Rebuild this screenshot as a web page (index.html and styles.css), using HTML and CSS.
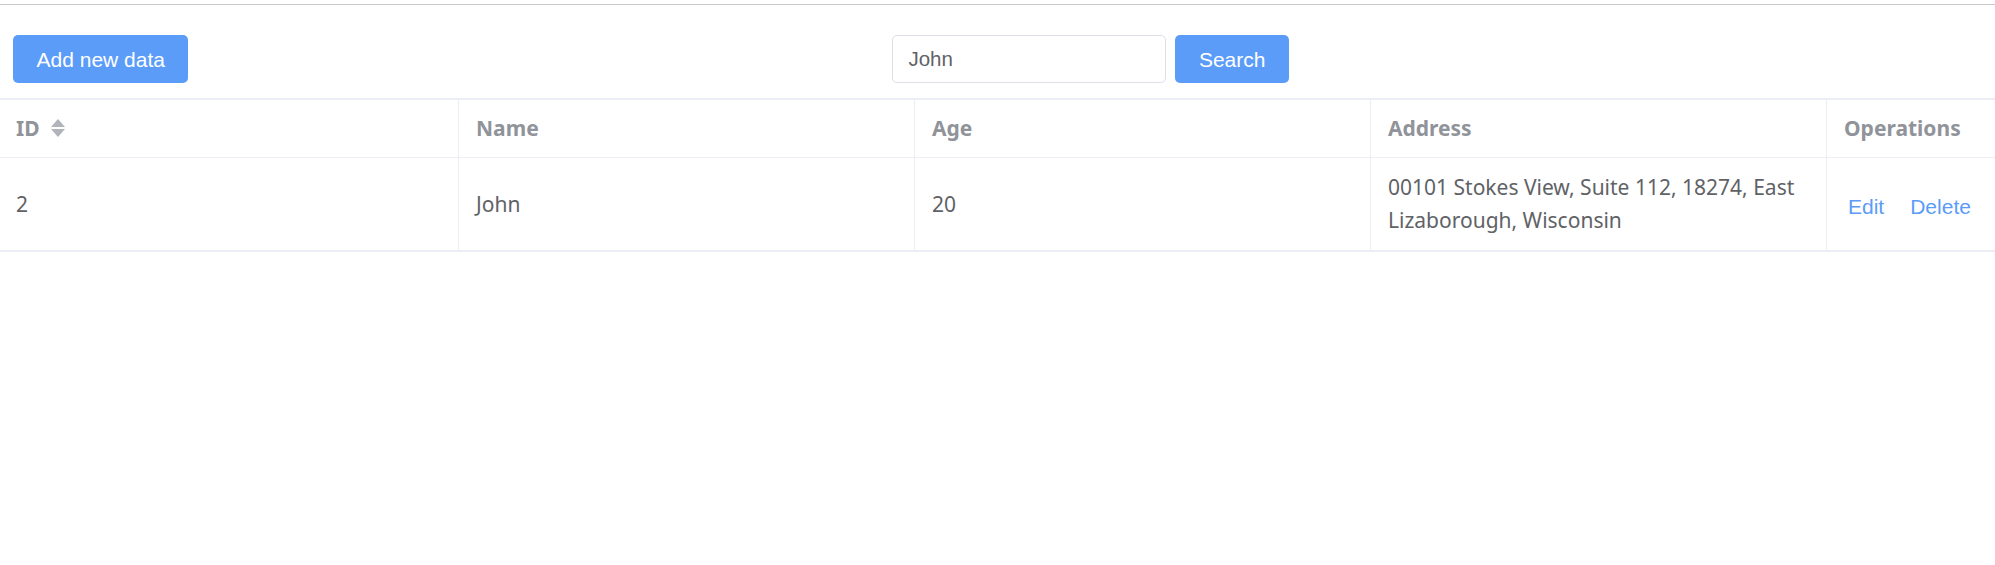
FILE: index.html
```html
<!DOCTYPE html>
<html lang="en">
<head>
<meta charset="utf-8">
<title>Data table</title>
<link rel="stylesheet" href="styles.css">
</head>
<body>
<div class="page">
  <div class="rule"></div>
  <div class="toolbar">
    <button class="btn" type="button">Add new data</button>
    <div class="search">
      <input class="search-input" type="text" value="John">
      <button class="btn" type="button">Search</button>
    </div>
  </div>
  <div class="table">
    <div class="row head">
      <div class="cell first">
        <span>ID</span>
        <svg class="sort" width="14" height="20" viewBox="0 0 14 20" aria-hidden="true">
          <polygon points="7,1 14,9 0,9" />
          <polygon points="0,11 14,11 7,19" />
        </svg>
      </div>
      <div class="cell">Name</div>
      <div class="cell">Age</div>
      <div class="cell">Address</div>
      <div class="cell">Operations</div>
    </div>
    <div class="row body">
      <div class="cell first">2</div>
      <div class="cell">John</div>
      <div class="cell">20</div>
      <div class="cell">00101 Stokes View, Suite 112, 18274, East Lizaborough, Wisconsin</div>
      <div class="cell ops">
        <a class="link" href="#">Edit</a>
        <a class="link" href="#">Delete</a>
      </div>
    </div>
  </div>
</div>
</body>
</html>
```

FILE: styles.css
```css
html, body {
  margin: 0;
  padding: 0;
  background: #ffffff;
}

.page {
  padding-top: 4px;
  font-family: "Noto Sans", "Open Sans", sans-serif;
}

.rule {
  height: 1px;
  background: #c9c9c9;
}

.toolbar {
  display: flex;
  align-items: center;
  padding: 30px 13px 15px;
}

.btn {
  box-sizing: border-box;
  height: 48px;
  padding: 0 23.5px;
  border: 0;
  border-radius: 5px;
  background: #5b9cf9;
  color: #ffffff;
  font-family: "Liberation Sans", Arial, sans-serif;
  font-size: 21px;
  line-height: 1;
}

.search {
  display: flex;
  align-items: center;
  gap: 9px;
  margin-left: 704px;
}

.search-input {
  box-sizing: border-box;
  width: 274px;
  height: 48px;
  padding: 0 15px;
  border: 1px solid #dcdfe6;
  border-radius: 5px;
  color: #606266;
  font-family: "Liberation Sans", Arial, sans-serif;
  font-size: 20.5px;
  outline: none;
}

.table {
  border-top: 2px solid #ebeef5;
}

.row {
  display: grid;
  grid-template-columns: 458px 456px 456px 456px 1fr;
}

.row.head {
  height: 58px;
  box-sizing: border-box;
  border-bottom: 1px solid #ebeef5;
}

.row.body {
  height: 94px;
  box-sizing: border-box;
  border-bottom: 2px solid #ebeef5;
}

.cell {
  display: flex;
  align-items: center;
  box-sizing: border-box;
  padding: 0 17px;
  border-left: 1px solid #ebeef5;
  font-size: 21px;
  line-height: 33px;
  color: #606266;
}

.cell.first {
  border-left: 0;
  padding-left: 16px;
}

.head .cell {
  font-weight: 700;
  color: #909399;
  padding-bottom: 1px;
}

.sort {
  margin-left: 11px;
  fill: #b1b4ba;
}

.ops {
  padding-top: 6px;
}

.link {
  padding: 0 4px;
  color: #5b9cf9;
  text-decoration: none;
  font-family: "Liberation Sans", Arial, sans-serif;
  font-size: 21px;
  line-height: 1.15;
}

.link + .link {
  margin-left: 18px;
}
```
